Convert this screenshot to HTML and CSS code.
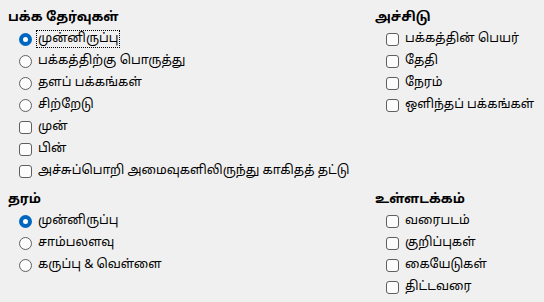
FILE: index.html
```html
<!DOCTYPE html>
<html lang="ta">
<head>
<meta charset="utf-8">
<link rel="stylesheet" href="styles.css">
</head>
<body>
<div class="page">
  <section class="group">
    <h2 class="title">பக்க தேர்வுகள்</h2>
    <ul class="list">
      <li class="item"><span class="radio on"></span><span class="label focus">முன்னிருப்பு</span></li>
      <li class="item"><span class="radio"></span><span class="label">பக்கத்திற்கு பொருத்து</span></li>
      <li class="item"><span class="radio"></span><span class="label">தளப் பக்கங்கள்</span></li>
      <li class="item"><span class="radio"></span><span class="label">சிற்றேடு</span></li>
      <li class="item"><span class="check"></span><span class="label">முன்</span></li>
      <li class="item"><span class="check"></span><span class="label">பின்</span></li>
      <li class="item"><span class="check"></span><span class="label">அச்சுப்பொறி அமைவுகளிலிருந்து காகிதத் தட்டு</span></li>
    </ul>
  </section>
  <section class="group">
    <h2 class="title">அச்சிடு</h2>
    <ul class="list">
      <li class="item"><span class="check"></span><span class="label">பக்கத்தின் பெயர்</span></li>
      <li class="item"><span class="check"></span><span class="label">தேதி</span></li>
      <li class="item"><span class="check"></span><span class="label">நேரம்</span></li>
      <li class="item"><span class="check"></span><span class="label">ஒளிந்தப் பக்கங்கள்</span></li>
    </ul>
  </section>
  <section class="group">
    <h2 class="title">தரம்</h2>
    <ul class="list">
      <li class="item"><span class="radio on"></span><span class="label">முன்னிருப்பு</span></li>
      <li class="item"><span class="radio"></span><span class="label">சாம்பலளவு</span></li>
      <li class="item"><span class="radio"></span><span class="label">கருப்பு &amp; வெள்ளை</span></li>
    </ul>
  </section>
  <section class="group">
    <h2 class="title">உள்ளடக்கம்</h2>
    <ul class="list">
      <li class="item"><span class="check"></span><span class="label">வரைபடம்</span></li>
      <li class="item"><span class="check"></span><span class="label">குறிப்புகள்</span></li>
      <li class="item"><span class="check"></span><span class="label">கையேடுகள்</span></li>
      <li class="item"><span class="check"></span><span class="label">திட்டவரை</span></li>
    </ul>
  </section>
</div>
</body>
</html>
```

FILE: styles.css
```css
html, body {
  margin: 0;
  padding: 0;
  background: #f0f0f0;
}
body {
  font-family: "Noto Sans Tamil", "Noto Sans", "DejaVu Sans", sans-serif;
  font-size: 12.5px;
  color: #000;
}
.page {
  display: grid;
  grid-template-columns: 367px 1fr;
  grid-template-rows: 182px auto;
  padding: 8px 0 0 8px;
}
.title {
  margin: 0;
  font-size: 13px;
  font-weight: bold;
  height: 20px;
  line-height: 20px;
}
.list {
  list-style: none;
  margin: 0;
  padding: 0 0 0 11px;
  display: flex;
  flex-direction: column;
}
.item {
  display: flex;
  align-items: center;
  height: 22px;
  gap: 4px;
}
.radio {
  width: 11px;
  height: 11px;
  border: 1px solid #5f5f5f;
  border-radius: 50%;
  background: #fcfcfc;
  flex: none;
}
.radio.on {
  width: 5px;
  height: 5px;
  border: 4px solid #0067c0;
  background: #fff;
}
.check {
  width: 11px;
  height: 11px;
  border: 1px solid #5f5f5f;
  border-radius: 3px;
  background: #fcfcfc;
  flex: none;
}
.label {
  padding: 0 1px;
  line-height: 16px;
  border: 1px dotted transparent;
}
.label.focus {
  border-color: #000;
}
```
